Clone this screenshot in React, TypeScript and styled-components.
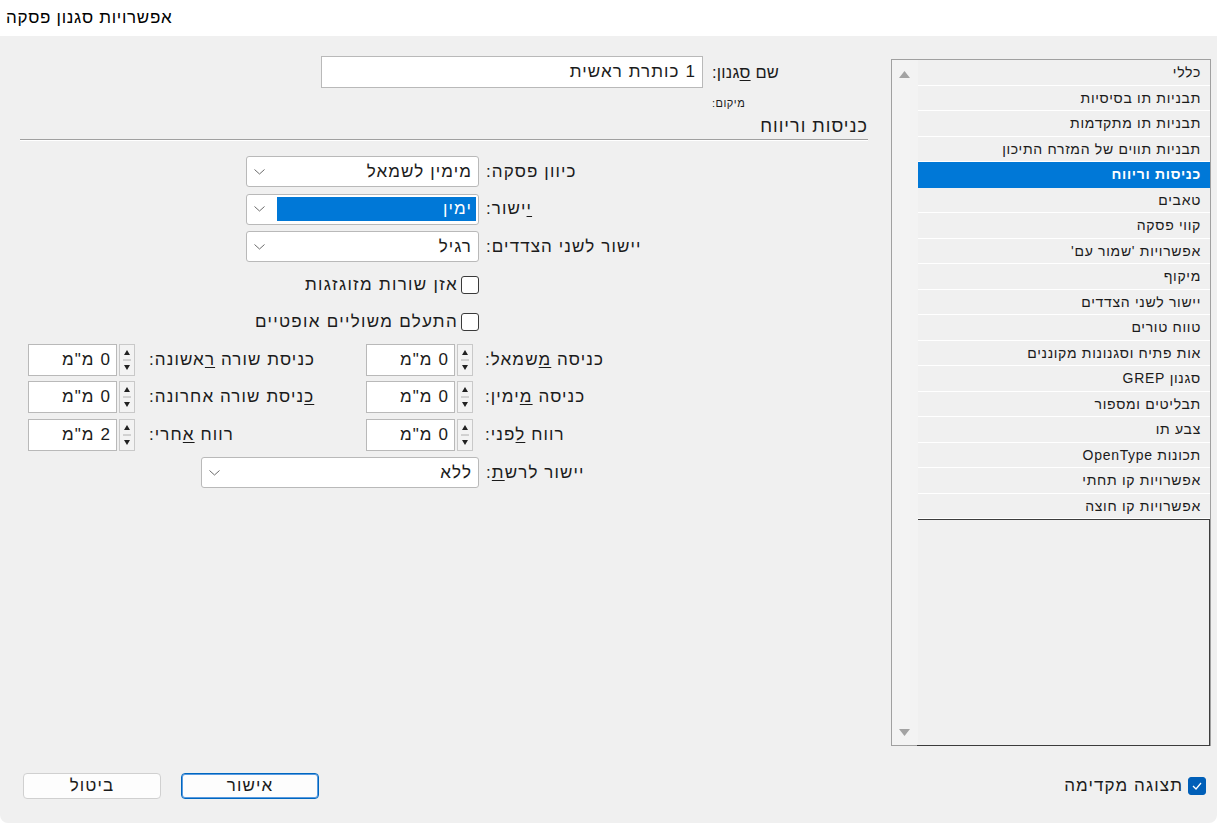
import React from "react";
import styled, { createGlobalStyle } from "styled-components";

const GlobalStyle = createGlobalStyle`
  html, body {
    margin: 0;
    padding: 0;
    background: #ffffff;
  }
  body {
    font-family: "Liberation Sans", "DejaVu Sans", sans-serif;
    color: #1b1b1b;
    letter-spacing: 1.1px;
  }
  * {
    box-sizing: border-box;
  }
`;

const Window = styled.div`
  width: 1217px;
  height: 823px;
  display: flex;
  flex-direction: column;
  background: #f0f0f0;
  border-radius: 0 0 8px 8px;
  overflow: hidden;
`;

const TitleBar = styled.div`
  height: 36px;
  flex-shrink: 0;
  background: #ffffff;
  display: flex;
  align-items: center;
  padding-left: 6px;
  font-size: 17px;
  letter-spacing: 0.7px;
  color: #000;
`;

const Body = styled.div`
  flex: 1;
  display: flex;
  flex-direction: column;
  direction: rtl;
`;

const Content = styled.div`
  display: flex;
  align-items: flex-start;
  gap: 23px;
  padding: 20px 6px 0 0;
`;

/* ---------- sidebar ---------- */

const Sidebar = styled.div`
  width: 320px;
  height: 687px;
  margin-top: 3px;
  display: flex;
  border: 1px solid #a0a0a0;
  background: #f0f0f0;
`;

const ListColumn = styled.div`
  flex: 1;
  display: flex;
  flex-direction: column;
`;

const ListItem = styled.div<{ $selected?: boolean }>`
  height: 25.5px;
  line-height: 25px;
  padding-right: 9px;
  font-size: 14px;
  letter-spacing: 0.7px;
  white-space: nowrap;
  color: ${(p) => (p.$selected ? "#ffffff" : "#1b1b1b")};
  background: ${(p) => (p.$selected ? "#0078d7" : "transparent")};
  font-weight: ${(p) => (p.$selected ? 700 : 400)};
  border-bottom: 1px solid ${(p) => (p.$selected ? "#0078d7" : "#ffffff")};
`;

const EmptyPane = styled.div`
  flex: 1;
  margin: 0 0 -1px -1px;
  border: 1px solid #3c3c3c;
  background: #f0f0f0;
`;

const ScrollTrack = styled.div`
  width: 26px;
  display: flex;
  flex-direction: column;
  justify-content: space-between;
  align-items: center;
  padding: 11px 2px 9px 0;
  background: #f3f3f3;
`;

const Arrow = ({ down }: { down?: boolean }) => (
  <svg width="11" height="7" viewBox="0 0 11 7">
    <polygon
      points={down ? "0,0 11,0 5.5,7" : "0,7 11,7 5.5,0"}
      fill="#a3a3a3"
    />
  </svg>
);

/* ---------- main form ---------- */

const Main = styled.div`
  width: 848px;
  display: flex;
  flex-direction: column;
`;

const NameGrid = styled.div`
  display: grid;
  grid-template-columns: 97px 382px;
  margin-right: 68px;
  align-items: center;
`;

const FieldLabel = styled.div<{ $gap?: number }>`
  font-size: 17px;
  text-align: left;
  white-space: nowrap;
  padding-left: ${(p) => p.$gap ?? 7}px;

  u {
    text-decoration: underline;
    text-underline-offset: 2px;
  }
`;

const NameLabel = styled(FieldLabel)`
  font-size: 16.5px;
  letter-spacing: 0.2px;
`;

const SmallLabel = styled.div`
  grid-column: 1;
  font-size: 11px;
  letter-spacing: 0.5px;
  line-height: 14px;
  text-align: left;
  padding-left: 9px;
  margin-top: 8px;
`;

const TextInput = styled.div`
  height: 32px;
  background: #ffffff;
  border: 1px solid #b9b9b9;
  font-size: 17px;
  line-height: 30px;
  padding-right: 6px;
  white-space: nowrap;
`;

const SectionHeader = styled.div`
  margin-top: 6px;
  font-size: 18px;
  letter-spacing: 1px;
  line-height: 20px;
  padding-bottom: 3px;
  border-bottom: 1px solid #a0a0a0;
  box-shadow: 0 1px 0 #ffffff;
`;

const FormGrid = styled.div`
  display: grid;
  grid-template-columns: 181px 113px 230px 108px;
  grid-auto-rows: 37.6px;
  align-items: center;
  margin-top: 13px;
  margin-right: 208px;
`;

const SelectBox = styled.div<{ $width: number }>`
  grid-column: 2 / 5;
  justify-self: start;
  width: ${(p) => p.$width}px;
  height: 31px;
  background: #ffffff;
  border: 1px solid #b9b9b9;
  border-radius: 3px;
  display: flex;
  align-items: center;
  padding: 0 2px 0 7px;
  font-size: 17px;
`;

const SelectValue = styled.div<{ $highlight?: boolean }>`
  flex: 1;
  height: 24px;
  line-height: 24px;
  padding-right: 4px;
  white-space: nowrap;
  color: ${(p) => (p.$highlight ? "#ffffff" : "#1b1b1b")};
  background: ${(p) => (p.$highlight ? "#0078d7" : "transparent")};
  margin-left: ${(p) => (p.$highlight ? "12px" : "0")};
`;

const Chevron = () => (
  <svg width="11" height="6" viewBox="0 0 11 6">
    <polyline
      points="0.5,0.5 5.5,5 10.5,0.5"
      fill="none"
      stroke="#6b6b6b"
      strokeWidth="1"
    />
  </svg>
);

const CheckRow = styled.label`
  grid-column: 2 / 5;
  justify-self: start;
  display: flex;
  align-items: center;
  gap: 3px;
  font-size: 17px;
  letter-spacing: 1.3px;
  white-space: nowrap;
`;

const CheckBox = styled.span<{ $checked?: boolean }>`
  width: 18px;
  height: 18px;
  flex-shrink: 0;
  border-radius: 3px;
  border: 1px solid ${(p) => (p.$checked ? "#005fb8" : "#3a3a3a")};
  background: ${(p) => (p.$checked ? "#005fb8" : "#ffffff")};
  display: flex;
  align-items: center;
  justify-content: center;
`;

const Spinner = styled.div`
  justify-self: end;
  display: flex;
  gap: 2px;
  height: 32px;
`;

const SpinInput = styled(TextInput)`
  width: 89px;
  padding-right: 5px;
`;

const SpinButtons = styled.div`
  width: 16px;
  height: 32px;
  border: 1px solid #c9c9c9;
  background: #f3f3f3;
  display: flex;
  flex-direction: column;
  align-items: center;
  justify-content: space-around;
`;

const SpinArrows = () => (
  <svg width="10" height="26" viewBox="0 0 10 26">
    <polygon points="2,8 8,8 5,3" fill="#222" />
    <line x1="1" y1="13" x2="9" y2="13" stroke="#b0b0b0" strokeWidth="1" />
    <polygon points="2,18 8,18 5,23" fill="#222" />
  </svg>
);

const SpinField = ({ value }: { value: string }) => (
  <Spinner>
    <SpinButtons>
      <SpinArrows />
    </SpinButtons>
    <SpinInput>{value}</SpinInput>
  </Spinner>
);

/* ---------- footer ---------- */

const Footer = styled.div`
  display: flex;
  justify-content: space-between;
  align-items: center;
  margin-top: 27px;
  padding: 0 11px 0 23px;
  height: 26px;
`;

const PreviewToggle = styled.label`
  display: flex;
  align-items: center;
  gap: 5px;
  font-size: 17px;
`;

const ButtonGroup = styled.div`
  display: flex;
  gap: 20px;
`;

const Button = styled.button<{ $primary?: boolean }>`
  width: 138px;
  height: 26px;
  padding: 0;
  font-family: inherit;
  font-size: 17px;
  letter-spacing: 1.1px;
  color: #1b1b1b;
  background: #fdfdfd;
  border-radius: 4px;
  border: 1px solid ${(p) => (p.$primary ? "#0067c0" : "#d0d0d0")};
  box-shadow: ${(p) => (p.$primary ? "inset 0 0 0 1px #5a9be0" : "none")};
`;

const categories = [
  "כללי",
  "תבניות תו בסיסיות",
  "תבניות תו מתקדמות",
  "תבניות תווים של המזרח התיכון",
  "כניסות וריווח",
  "טאבים",
  "קווי פסקה",
  "אפשרויות 'שמור עם'",
  "מיקוף",
  "יישור לשני הצדדים",
  "טווח טורים",
  "אות פתיח וסגנונות מקוננים",
  "סגנון GREP",
  "תבליטים ומספור",
  "צבע תו",
  "תכונות OpenType",
  "אפשרויות קו תחתי",
  "אפשרויות קו חוצה",
];

const App = () => {
  return (
    <>
      <GlobalStyle />
      <Window>
        <TitleBar>אפשרויות סגנון פסקה</TitleBar>
        <Body>
          <Content>
            <Sidebar>
              <ListColumn>
                {categories.map((c) => (
                  <ListItem key={c} $selected={c === "כניסות וריווח"}>
                    {c}
                  </ListItem>
                ))}
                <EmptyPane />
              </ListColumn>
              <ScrollTrack>
                <Arrow />
                <Arrow down />
              </ScrollTrack>
            </Sidebar>

            <Main>
              <NameGrid>
                <NameLabel $gap={9}>
                  שם <u>ס</u>גנון:
                </NameLabel>
                <TextInput>1 כותרת ראשית</TextInput>
                <SmallLabel>מיקום:</SmallLabel>
              </NameGrid>
              <SectionHeader>כניסות וריווח</SectionHeader>

              <FormGrid>
                <FieldLabel>כיוון פסקה:</FieldLabel>
                <SelectBox $width={233}>
                  <SelectValue>מימין לשמאל</SelectValue>
                  <Chevron />
                </SelectBox>

                <FieldLabel>
                  <u>י</u>ישור:
                </FieldLabel>
                <SelectBox $width={233}>
                  <SelectValue $highlight>ימין</SelectValue>
                  <Chevron />
                </SelectBox>

                <FieldLabel>יישור לשני הצדדים:</FieldLabel>
                <SelectBox $width={233}>
                  <SelectValue>רגיל</SelectValue>
                  <Chevron />
                </SelectBox>

                <CheckRow>
                  <CheckBox />
                  אזן שורות מזוגזגות
                </CheckRow>

                <CheckRow>
                  <CheckBox />
                  התעלם משוליים אופטיים
                </CheckRow>

                <FieldLabel $gap={6}>
                  כניסה <u>מ</u>שמאל:
                </FieldLabel>
                <SpinField value='0 מ"מ' />
                <FieldLabel $gap={13}>
                  כניסת שורה <u>ר</u>אשונה:
                </FieldLabel>
                <SpinField value='0 מ"מ' />

                <FieldLabel $gap={6}>
                  כניסה <u>מ</u>ימין:
                </FieldLabel>
                <SpinField value='0 מ"מ' />
                <FieldLabel $gap={13}>
                  <u>כ</u>ניסת שורה אחרונה:
                </FieldLabel>
                <SpinField value='0 מ"מ' />

                <FieldLabel $gap={6}>
                  רווח <u>ל</u>פני:
                </FieldLabel>
                <SpinField value='0 מ"מ' />
                <FieldLabel $gap={13}>
                  רווח <u>א</u>חרי:
                </FieldLabel>
                <SpinField value='2 מ"מ' />

                <FieldLabel>
                  יישור לרש<u>ת</u>:
                </FieldLabel>
                <SelectBox $width={278}>
                  <SelectValue>ללא</SelectValue>
                  <Chevron />
                </SelectBox>
              </FormGrid>
            </Main>
          </Content>

          <Footer>
            <PreviewToggle>
              <CheckBox $checked>
                <svg width="10" height="8" viewBox="0 0 10 8">
                  <polyline
                    points="1,4 4,7 9,1"
                    fill="none"
                    stroke="#ffffff"
                    strokeWidth="1.3"
                  />
                </svg>
              </CheckBox>
              תצוגה מקדימה
            </PreviewToggle>
            <ButtonGroup>
              <Button $primary>אישור</Button>
              <Button>ביטול</Button>
            </ButtonGroup>
          </Footer>
        </Body>
      </Window>
    </>
  );
};

export default App;
